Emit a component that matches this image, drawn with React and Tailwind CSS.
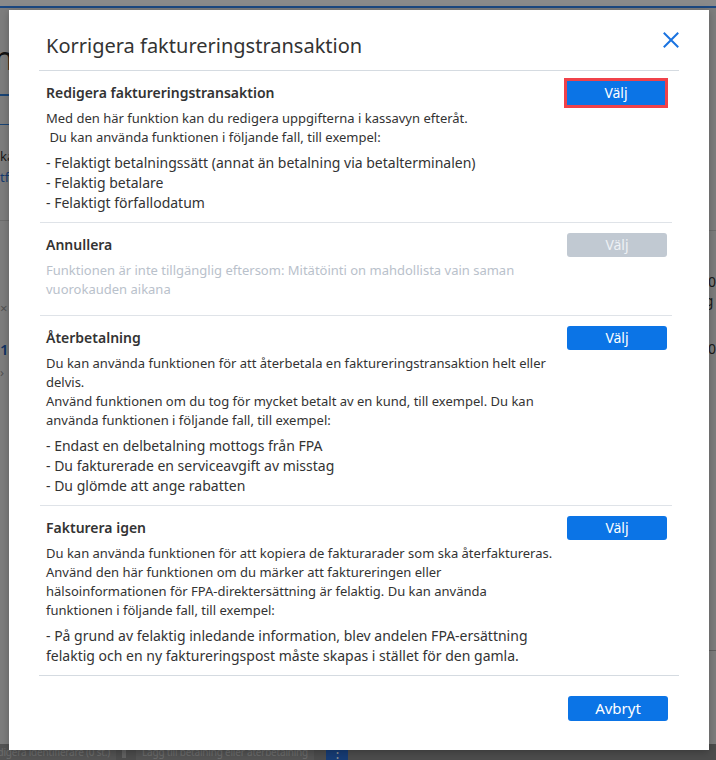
import React from "react";

function ChoiceButton({ disabled = false, highlighted = false }) {
  return (
    <button
      type="button"
      disabled={disabled}
      className={
        "h-[24px] text-[14px] leading-none " +
        (disabled
          ? "w-[100px] rounded-[3px] bg-[#c1c9d2] text-[#eef1f5]"
          : highlighted
          ? "mr-[2px] w-[98px] rounded-none bg-[#0b74e6] text-white outline outline-[3px] outline-[#f0424a]"
          : "w-[100px] rounded-[3px] bg-[#0b74e6] text-white")
      }
    >
      Välj
    </button>
  );
}

function Section({ title, disabled, highlighted, paragraph, list, last }) {
  return (
    <div
      className={
        "pt-[10px] pb-[9px] pl-[6px] pr-[5px] " +
        (last ? "" : "border-b border-[#dfe3e8]")
      }
    >
      <div className="flex h-[24px] items-center justify-between">
        <h3 className="text-[14px] font-semibold leading-[20px] text-[#333]">
          {title}
        </h3>
        <ChoiceButton disabled={disabled} highlighted={highlighted} />
      </div>
      <p
        className={
          "mt-[4px] text-[13px] leading-[19px] " +
          (disabled ? "text-[#b9c1cb]" : "text-[#333]")
        }
      >
        {paragraph.map((line, i) => (
          <React.Fragment key={i}>
            {line}
            {i < paragraph.length - 1 && <br />}
          </React.Fragment>
        ))}
      </p>
      {list ? (
        <ul className="mt-[6px] text-[14px] leading-[20px] text-[#333]">
          {list.map((line, i) => (
            <li key={i}>{line}</li>
          ))}
        </ul>
      ) : (
        <div className="h-[7px]" />
      )}
    </div>
  );
}

function Page() {
  return (
    <div className="flex h-[760px] w-[716px] flex-col bg-[#e8e8e8]">
      <div className="h-[6px] bg-white" />
      <div className="h-[2px] bg-[#3385f0]" />
      <div className="flex flex-1">
        <div className="w-[708px] pt-[30px]">
          <div className="-ml-[6px] text-[32px] leading-[40px] text-[#222]">nl</div>
          <div className="mt-[16px] h-[2px] bg-[#2f7fd8]" />
          <div className="mt-[28px] h-px bg-[#2f7fd8]" />
          <div className="mt-[22px] text-[13px] leading-[18px] text-[#333]">kassa</div>
          <div className="mt-[3px] text-[13px] leading-[18px] text-[#2a6fd0]">tf</div>
          <div className="mt-[34px] h-px bg-[#c9c9c9]" />
          <div className="mt-[78px] text-[13px] leading-[18px] text-[#999]">×</div>
          <div className="mt-[22px] text-[15px] font-semibold leading-[20px] text-[#1f5fb8]">18</div>
          <div className="mt-[4px] text-[13px] leading-[18px] text-[#999]">›</div>
        </div>
        <div className="flex-1 pt-[222px]">
          <div className="h-px bg-[#c9c9c9]" />
          <div className="mt-[42px] text-[14px] leading-[18px] text-[#333]">0,00</div>
          <div className="mt-[1px] text-[14px] leading-[18px] text-[#333]">dag</div>
          <div className="mt-[30px] text-[14px] leading-[18px] text-[#333]">0,00</div>
          <div className="mt-[292px] h-px bg-[#b0b0b0]" />
        </div>
      </div>
      <div className="flex h-[16px] items-center gap-[6px] bg-[#8c8c8c] text-[10px] leading-[16px] tracking-[-0.2px] text-[#c8c8c8]">
        <span className="-ml-[14px] bg-[#9a9a9a] pr-[6px]">Redigera identifierare (0 st.)</span>
        <span className="h-[12px] w-[4px] bg-[#b5b5b5]" />
        <span className="ml-[4px] bg-[#9a9a9a] px-[6px]">Lägg till betalning eller återbetalning</span>
        <span className="ml-[6px] flex h-[16px] w-[22px] items-center justify-center bg-[#2a70d8] text-[13px] text-white">⋮</span>
      </div>
    </div>
  );
}

export default function App() {
  const sections = [
    {
      title: "Redigera faktureringstransaktion",
      highlighted: true,
      paragraph: [
        "Med den här funktion kan du redigera uppgifterna i kassavyn efteråt.",
        "\u00a0Du kan använda funktionen i följande fall, till exempel:",
      ],
      list: [
        "- Felaktigt betalningssätt (annat än betalning via betalterminalen)",
        "- Felaktig betalare",
        "- Felaktigt förfallodatum",
      ],
    },
    {
      title: "Annullera",
      disabled: true,
      paragraph: [
        "Funktionen är inte tillgänglig eftersom: Mitätöinti on mahdollista vain saman",
        "vuorokauden aikana",
      ],
    },
    {
      title: "Återbetalning",
      paragraph: [
        "Du kan använda funktionen för att återbetala en faktureringstransaktion helt eller",
        "delvis.",
        "Använd funktionen om du tog för mycket betalt av en kund, till exempel. Du kan",
        "använda funktionen i följande fall, till exempel:",
      ],
      list: [
        "- Endast en delbetalning mottogs från FPA",
        "- Du fakturerade en serviceavgift av misstag",
        "- Du glömde att ange rabatten",
      ],
    },
    {
      title: "Fakturera igen",
      last: true,
      paragraph: [
        "Du kan använda funktionen för att kopiera de fakturarader som ska återfaktureras.",
        "Använd den här funktionen om du märker att faktureringen eller",
        "hälsoinformationen för FPA-direktersättning är felaktig. Du kan använda",
        "funktionen i följande fall, till exempel:",
      ],
      list: [
        "- På grund av felaktig inledande information, blev andelen FPA-ersättning",
        "felaktig och en ny faktureringspost måste skapas i stället för den gamla.",
      ],
    },
  ];

  return (
    <div className="relative h-[760px] w-[716px] overflow-hidden font-['Noto_Sans',sans-serif]">
      <Page />
      <div className="absolute inset-0 bg-black/[0.46]" />
      <div className="absolute left-[9px] top-[10px] flex h-[740px] w-[700px] flex-col bg-white shadow-[0_2px_8px_rgba(0,0,0,0.25)]">
        <div className="mx-[30px] flex h-[61px] justify-between border-b border-[#d5dbe1]">
          <h2 className="mt-[24px] pl-[7px] text-[20px] leading-[24px] text-[#333]">
            Korrigera faktureringstransaktion
          </h2>
          <button type="button" className="mt-[22px] h-[16px] w-[16px] text-[#1a73e0]">
            <svg viewBox="0 0 16 16" width="16" height="16" fill="none" stroke="currentColor" strokeWidth="2" strokeLinecap="square">
              <path d="M1.5 1.5 L14.5 14.5 M14.5 1.5 L1.5 14.5" />
            </svg>
          </button>
        </div>
        <div className="ml-[31px] w-[632px]">
          {sections.map((s) => (
            <Section key={s.title} {...s} />
          ))}
        </div>
        <div className="mx-[30px] flex justify-end border-t border-[#d5dbe1] pr-[11px] pt-[20px]">
          <button type="button" className="h-[25px] w-[100px] rounded-[3px] bg-[#0b74e6] text-[15px] leading-none text-white">
            Avbryt
          </button>
        </div>
      </div>
    </div>
  );
}
